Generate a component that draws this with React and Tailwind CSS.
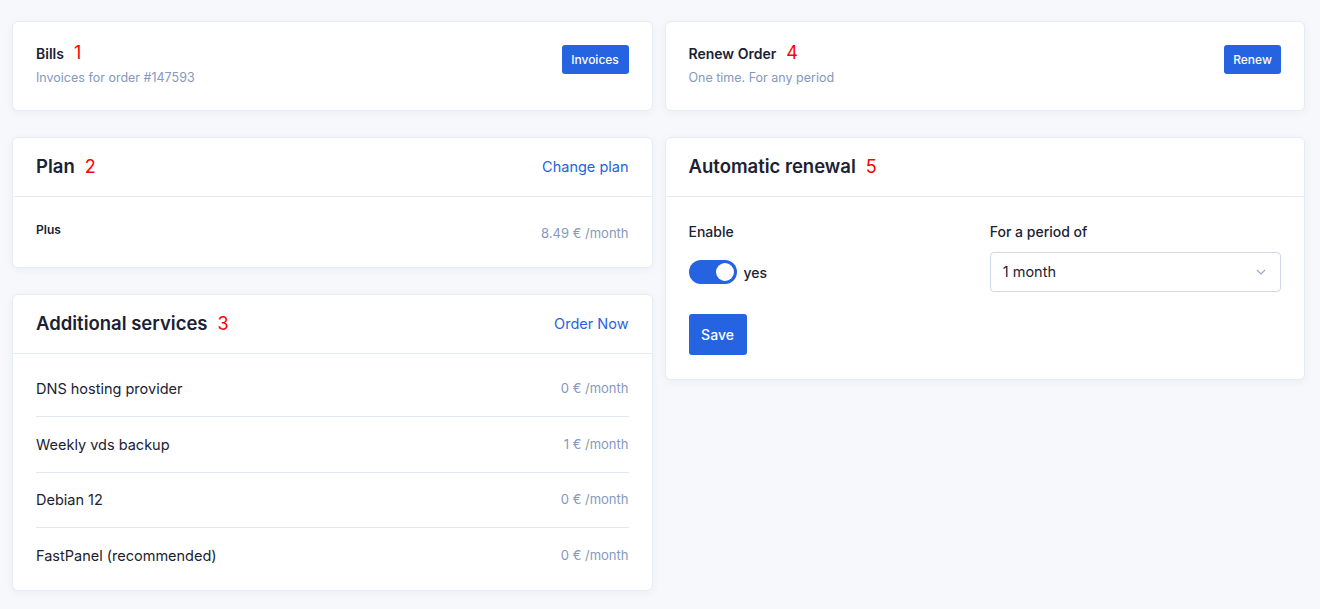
import React from "react";

function Num({ n }) {
  return <span className="ml-[10px] text-[18px] font-normal leading-none text-[#ff0000]">{n}</span>;
}

function Card({ children, className = "" }) {
  return (
    <div className={"rounded-[6px] border border-[#e6ecf5] bg-white shadow-[0_2px_8px_rgba(30,50,90,0.05)] " + className}>
      {children}
    </div>
  );
}

function SimpleCard({ title, n, sub, btn, btnW }) {
  return (
    <Card className="flex h-[90px] items-start justify-between px-[23px] pt-[23px]">
      <div className="flex flex-col">
        <div className="flex h-[16px] items-center text-[14px] font-semibold text-[#1a2233]">
          {title}
          <Num n={n} />
        </div>
        <div className="mt-[9px] text-[12.5px] leading-[16px] text-[#8598be]">{sub}</div>
      </div>
      <button className={"h-[29px] rounded-[3px] bg-[#2563e0] text-[12px] font-medium text-white " + btnW}>{btn}</button>
    </Card>
  );
}

function Header({ title, n, link }) {
  return (
    <div className="flex h-[59px] items-center justify-between border-b border-[#e6ecf5] px-[23px]">
      <div className="flex items-center text-[18.5px] font-semibold text-[#1a2233]">
        {title}
        <Num n={n} />
      </div>
      {link && <a className="text-[14.5px] text-[#2563e0]">{link}</a>}
    </div>
  );
}

const services = [
  ["DNS hosting provider", "0 € /month", "h-[56px]"],
  ["Weekly vds backup", "1 € /month", "h-[56px]"],
  ["Debian 12", "0 € /month", "h-[55px]"],
  ["FastPanel (recommended)", "0 € /month", "h-[56px]"],
];

export default function App() {
  return (
    <div
      className="min-h-[609px] bg-[#f6f8fb] pl-3 pr-[15px] pt-[21px]"
      style={{ fontFamily: "Inter, 'Noto Sans', sans-serif" }}
    >
      <div className="grid grid-cols-2 items-start gap-3">
        <div className="flex flex-col gap-[26px]">
          <SimpleCard title="Bills" n="1" sub="Invoices for order #147593" btn="Invoices" btnW="w-[67px]" />
          <Card>
            <Header title="Plan" n="2" link="Change plan" />
            <div className="flex h-[70px] justify-between px-[23px] pt-[24px]">
              <div className="text-[12px] font-semibold text-[#1a2233]">Plus</div>
              <div className="pt-[3px] text-[13px] text-[#8598be]">8.49 € /month</div>
            </div>
          </Card>
          <Card>
            <Header title="Additional services" n="3" link="Order Now" />
            <div className="px-[23px] pt-[7px] pb-[6px]">
              {services.map(([name, price, h], i) => (
                <div
                  key={name}
                  className={
                    "flex items-center justify-between " + h + " " +
                    (i < services.length - 1 ? "border-b border-[#e2e8f2]" : "")
                  }
                >
                  <span className="text-[14.5px] text-[#1a2233]">{name}</span>
                  <span className="text-[13px] text-[#8598be]">{price}</span>
                </div>
              ))}
            </div>
          </Card>
        </div>
        <div className="flex flex-col gap-[26px]">
          <SimpleCard title="Renew Order" n="4" sub="One time. For any period" btn="Renew" btnW="w-[57px]" />
          <Card>
            <Header title="Automatic renewal" n="5" />
            <div className="px-[23px] pt-[24px] pb-[24px]">
              <div className="grid grid-cols-2 gap-[10px]">
                <div>
                  <div className="text-[14px] font-medium text-[#1a2233]">Enable</div>
                  <div className="mt-[10px] flex h-[40px] items-center">
                    <div className="flex h-[24px] w-[48px] items-center justify-end rounded-full bg-[#2563e0] pr-[3px]">
                      <div className="h-[18px] w-[18px] rounded-full bg-white" />
                    </div>
                    <span className="ml-[7px] text-[14px] font-medium text-[#1a2233]">yes</span>
                  </div>
                </div>
                <div>
                  <div className="text-[14px] font-medium text-[#1a2233]">For a period of</div>
                  <div className="mt-[10px] flex h-[40px] items-center justify-between rounded-[4px] border border-[#cfd8e8] px-3">
                    <span className="text-[14.5px] text-[#1a2233]">1 month</span>
                    <svg width="12" height="8" viewBox="0 0 12 8" className="mr-[1px]">
                      <path d="M2 2l4 4 4-4" fill="none" stroke="#9aa8c4" strokeWidth="1.2" />
                    </svg>
                  </div>
                </div>
              </div>
              <button className="mt-[22px] h-[41px] w-[58px] rounded-[3px] bg-[#2563e0] text-[14px] font-medium text-white">
                Save
              </button>
            </div>
          </Card>
        </div>
      </div>
    </div>
  );
}
